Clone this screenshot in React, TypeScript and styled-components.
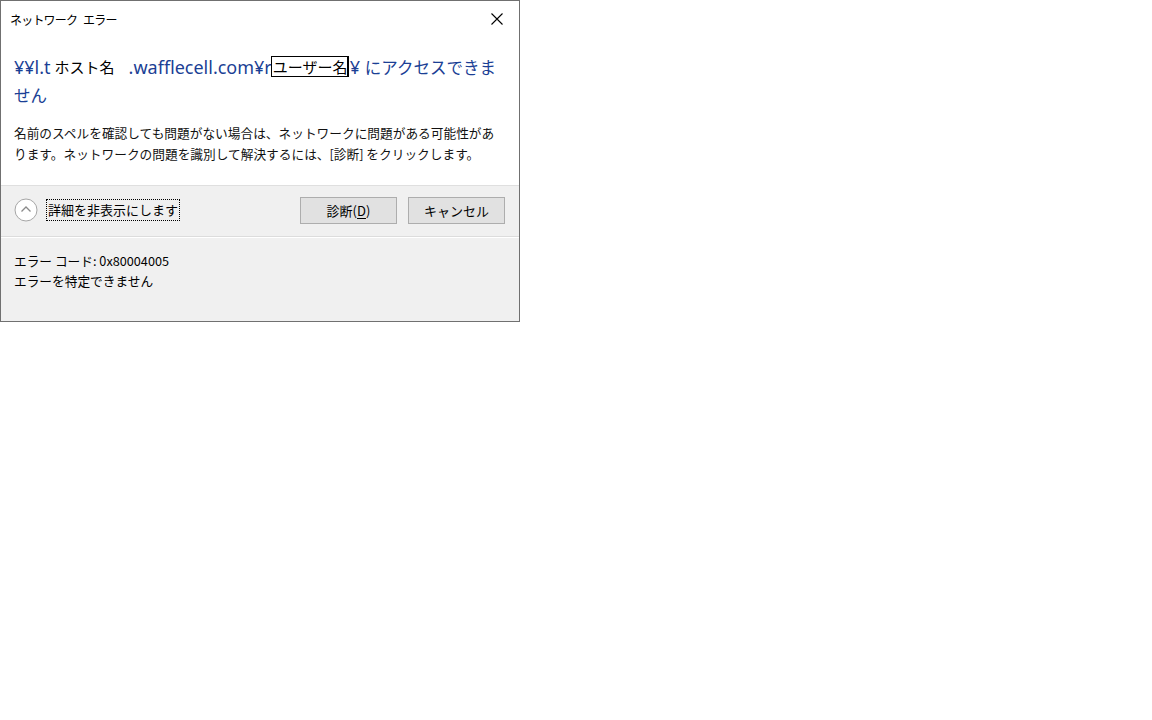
import React from 'react';
import styled, { createGlobalStyle } from 'styled-components';

const GlobalStyle = createGlobalStyle`
  html, body {
    margin: 0;
    padding: 0;
    background: #ffffff;
  }
  body {
    font-family: "Noto Sans CJK JP", "Noto Sans", sans-serif;
    color: #000;
  }
`;

const App = () => {
  return (
    <>
      <GlobalStyle />
      <Dialog>
        <TitleBar>
          <Title>ネットワーク エラー</Title>
          <CloseButton aria-label="close">
            <svg width="12" height="12" viewBox="0 0 12 12">
              <path d="M0.5 0.5 L11.5 11.5 M11.5 0.5 L0.5 11.5" stroke="#000" strokeWidth="1.1" fill="none" />
            </svg>
          </CloseButton>
        </TitleBar>

        <Content>
          <MainInstruction>
            ¥¥l.t<HostMask>ホスト名</HostMask>.wafflecell.com¥r<UserMask>ユーザー名</UserMask>¥ <Kana>にアクセスできません</Kana>
          </MainInstruction>
          <BodyText>
            名前のスペルを確認しても問題がない場合は、ネットワークに問題がある可能性があります。ネットワークの問題を識別して解決するには、[診断] をクリックします。
          </BodyText>
        </Content>

        <ActionBar>
          <DetailsToggle>
            <ChevronCircle>
              <svg width="24" height="24" viewBox="0 0 24 24">
                <circle cx="12" cy="12" r="11" stroke="#a6a6a6" strokeWidth="1" fill="#fff" />
                <path d="M7.5 13.5 L12 9 L16.5 13.5" stroke="#8a8a8a" strokeWidth="1.3" fill="none" />
              </svg>
            </ChevronCircle>
            <FocusLabel>詳細を非表示にします</FocusLabel>
          </DetailsToggle>
          <Buttons>
            <DialogButton>
              診断(<u>D</u>)
            </DialogButton>
            <DialogButton>キャンセル</DialogButton>
          </Buttons>
        </ActionBar>

        <Details>
          <DetailLine>エラー コード: 0x80004005</DetailLine>
          <DetailLine>エラーを特定できません</DetailLine>
        </Details>
      </Dialog>
    </>
  );
};

export default App;

// ========== Styled Components ==========

const Dialog = styled.div`
  width: 518px;
  height: 320px;
  border: 1px solid #707070;
  background: #ffffff;
  display: flex;
  flex-direction: column;
  overflow: hidden;
`;

const TitleBar = styled.div`
  height: 37px;
  display: flex;
  align-items: center;
  justify-content: space-between;
  padding-left: 9px;
  box-sizing: border-box;
`;

const Title = styled.div`
  font-size: 12px;
  letter-spacing: -0.8px;
  word-spacing: 4px;
  color: #000;
  margin-top: -1px;
`;

const CloseButton = styled.div`
  width: 44px;
  height: 37px;
  display: flex;
  align-items: center;
  justify-content: center;
  margin-top: -2px;
`;

const Content = styled.div`
  padding: 15px 13px 0 13px;
  height: 147px;
  box-sizing: border-box;
`;

const MainInstruction = styled.div`
  font-family: "Noto Sans", "Noto Sans CJK JP", sans-serif;
  font-size: 18px;
  line-height: 28px;
  color: #1b3f95;
`;

const Kana = styled.span`
  font-family: "Noto Sans CJK JP", sans-serif;
  font-size: 16.5px;
`;

const HostMask = styled.span`
  display: inline-block;
  width: 78px;
  box-sizing: border-box;
  background: #fff;
  color: #000;
  font-family: "Noto Sans CJK JP", sans-serif;
  font-size: 15px;
  line-height: 22px;
  padding-left: 4px;
  vertical-align: 1px;
`;

const UserMask = styled.span`
  display: inline-block;
  width: 78px;
  box-sizing: border-box;
  background: #fff;
  color: #000;
  font-family: "Noto Sans CJK JP", sans-serif;
  font-size: 15px;
  line-height: 19px;
  border: 1px solid #000;
  border-right-width: 2px;
  padding-left: 1px;
  margin-left: -1px;
  margin-right: 1px;
  vertical-align: 1px;
  white-space: nowrap;
`;

const BodyText = styled.div`
  margin-top: 13px;
  font-size: 12.7px;
  line-height: 21px;
  color: #111;
  padding-right: 4px;
`;

const ActionBar = styled.div`
  height: 50px;
  background: #f0f0f0;
  border-top: 1px solid #dfdfdf;
  border-bottom: 1px solid #dcdcdc;
  box-shadow: 0 1px 0 #ffffff;
  display: flex;
  align-items: center;
  justify-content: space-between;
  padding: 0 14px 0 13px;
`;

const DetailsToggle = styled.div`
  display: flex;
  align-items: center;
  gap: 8px;
`;

const ChevronCircle = styled.div`
  width: 24px;
  height: 24px;
  display: flex;
  margin-top: -2px;
`;

const FocusLabel = styled.span`
  font-size: 13px;
  line-height: 20px;
  border: 1px dotted #000;
  padding: 0 1px;
  color: #000;
  margin-top: -2px;
`;

const Buttons = styled.div`
  display: flex;
  gap: 11px;
  margin-top: -2px;
`;

const DialogButton = styled.button`
  width: 97px;
  height: 27px;
  background: #e1e1e1;
  border: 1px solid #adadad;
  font-family: "Noto Sans CJK JP", "Noto Sans", sans-serif;
  font-size: 13px;
  color: #000;
  padding: 0;
  display: flex;
  align-items: center;
  justify-content: center;

  u {
    text-underline-offset: 2px;
  }
`;

const Details = styled.div`
  flex: 1;
  background: #f0f0f0;
  margin-top: 1px;
  padding: 13px 13px 0 13px;
`;

const DetailLine = styled.div`
  font-size: 12.7px;
  line-height: 20px;
  color: #000;
`;
